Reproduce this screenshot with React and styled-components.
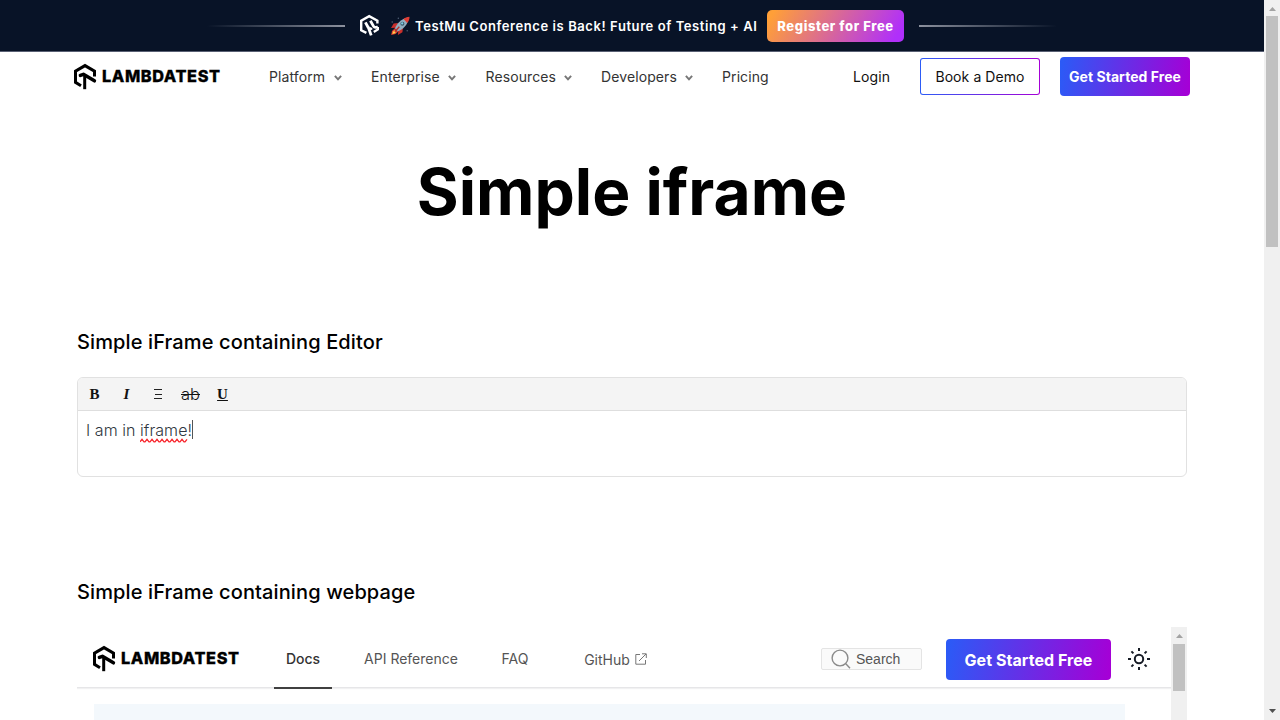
import React from "react";
import styled, { createGlobalStyle } from "styled-components";

const Global = createGlobalStyle`
  *, *::before, *::after { box-sizing: border-box; }
  html, body { margin: 0; padding: 0; overflow: hidden; background: #fff; }
  body { font-family: Inter, "Liberation Sans", sans-serif; color: #000; }
  svg { display: block; flex: none; }
`;

const Screen = styled.div`
  display: flex;
  width: 1280px;
  height: 720px;
  overflow: hidden;
`;

const Page = styled.div`
  width: 1264px;
  height: 720px;
  overflow: hidden;
`;

const Scrollbar = styled.div`
  flex: none;
  width: 16px;
  height: ${(p) => p.$height}px;
  padding: 0 2px;
  background: #f0f0f0;
  display: flex;
  flex-direction: column;
`;

const ScrollArrow = styled.span`
  height: ${(p) => p.$h}px;
  padding-top: ${(p) => p.$top}px;
  display: flex;
  justify-content: center;
`;

const Thumb = styled.div`
  height: ${(p) => p.$h}px;
  background: #c1c1c1;
  margin-bottom: auto;
`;

const Banner = styled.div`
  height: 52px;
  display: flex;
  align-items: center;
  padding-left: 207px;
  background: #081327;
  border-bottom: 1px solid #596074;
`;

const Ray = styled.span`
  width: 138px;
  height: 2px;
  margin-top: 1px;
  margin-left: ${(p) => (p.$flip ? 15 : 0)}px;
  background: linear-gradient(${(p) => (p.$flip ? "270deg" : "90deg")}, rgba(140, 145, 158, 0), #8c919e);
`;

const BannerLogo = styled.span`
  margin: 0 10px 0 14px;
`;

const BannerText = styled.span`
  flex: none;
  width: 357px;
  padding-left: 5px;
  margin-top: 1px;
  white-space: nowrap;
  color: #fff;
  font-size: 13px;
  font-weight: 600;
  letter-spacing: 0.58px;
`;

const RegisterButton = styled.a`
  width: 137px;
  height: 32px;
  border-radius: 5px;
  display: flex;
  align-items: center;
  justify-content: center;
  padding-top: 1px;
  color: #fff;
  font-size: 13px;
  font-weight: 800;
  letter-spacing: 0.6px;
  white-space: nowrap;
  background: linear-gradient(120deg, #ff9f38 5%, #b02ffb 93%);
`;

const Header = styled.header`
  height: 50px;
  display: flex;
  align-items: center;
  padding-left: 73px;
`;

const Brand = styled.a`
  width: ${(p) => p.$w}px;
  display: flex;
  align-items: center;
`;

const Nav = styled.nav`
  display: flex;
  align-items: center;
  width: 584px;
`;

const NavLink = styled.a`
  display: flex;
  align-items: center;
  justify-content: space-between;
  width: ${(p) => p.$w}px;
  margin-right: ${(p) => p.$mr ?? 0}px;
  font-size: 14px;
  line-height: 20px;
  letter-spacing: 0.1px;
  color: #333;
  white-space: nowrap;
  svg { margin-top: 2px; }
`;

const Login = styled.a`
  width: 67px;
  margin-bottom: 1px;
  font-size: 14px;
  letter-spacing: 0.1px;
  color: #111;
`;

const DemoButton = styled.a`
  width: 120px;
  height: 37px;
  margin: 0 20px 1px 0;
  border: 1px solid transparent;
  border-radius: 3px;
  display: flex;
  align-items: center;
  justify-content: center;
  font-size: 14px;
  letter-spacing: 0.08px;
  color: #111;
  background: linear-gradient(#fff, #fff) padding-box,
    linear-gradient(90deg, #2c5cf6, #a500d6) border-box;
`;

const StartButton = styled.a`
  flex: none;
  width: ${(p) => p.$w}px;
  height: ${(p) => p.$h}px;
  margin-top: ${(p) => p.$mt ?? 0}px;
  margin-bottom: ${(p) => p.$mb ?? 0}px;
  border-radius: 4px;
  display: flex;
  align-items: center;
  justify-content: center;
  color: #fff;
  font-size: ${(p) => p.$size}px;
  font-weight: 700;
  letter-spacing: ${(p) => p.$ls ?? 0}px;
  white-space: nowrap;
  background: linear-gradient(100deg, #2c5af6 2%, #a500d6 98%);
`;

const Title = styled.h1`
  margin: 52px 0 0;
  height: 76px;
  line-height: 76px;
  font-size: 64px;
  font-weight: 700;
  text-align: center;
`;

const Section = styled.section`
  margin: ${(p) => p.$top}px 0 0 77px;
  width: 1110px;
`;

const Subtitle = styled.h2`
  margin: 0 0 21px;
  font-size: 20px;
  line-height: 28px;
  font-weight: 500;
  letter-spacing: 0.12px;
`;

const Editor = styled.div`
  height: 100px;
  border: 1px solid #e1e1e1;
  border-radius: 6px;
  overflow: hidden;
`;

const Toolbar = styled.div`
  display: flex;
  height: 33px;
  padding-top: 1px;
  background: #f4f4f4;
  border-bottom: 1px solid #dedede;
`;

const Tool = styled.button`
  width: 32px;
  height: ${(p) => (p.$sans ? 29 : 31)}px;
  padding: 0 0 0 1px;
  border: 0;
  background: none;
  color: #111;
  font-family: ${(p) => (p.$sans ? "Inter, sans-serif" : '"Liberation Serif", serif')};
  font-size: ${(p) => (p.$sans ? 16.5 : 15)}px;
  font-weight: ${(p) => (p.$sans ? 300 : 700)};
  font-style: ${(p) => (p.$italic ? "italic" : "normal")};
  text-decoration: ${(p) => p.$line ?? "none"};
  display: flex;
  align-items: center;
  justify-content: center;
  svg { margin-right: 2px; }
`;

const Content = styled.div`
  display: flex;
  padding: 7px 8px;
  font-size: 16px;
  font-weight: 300;
  line-height: 24px;
  letter-spacing: 0.06px;
  color: #2f3640;
  white-space: pre;
`;

const Misspelled = styled.span`
  position: relative;
  svg { position: absolute; left: 0; bottom: -1px; }
`;

const Caret = styled.i`
  width: 1px;
  height: 19px;
  margin-top: 2px;
  background: #555;
`;

const Frame = styled.div`
  height: 93px;
  display: flex;
  overflow: hidden;
`;

const FrameBody = styled.div`
  width: 1094px;
`;

const FrameNav = styled.div`
  height: 61px;
  display: flex;
  align-items: center;
  padding: 4px 0 0 15px;
  border-bottom: 1px solid #e6e6e8;
  box-shadow: 0 1px 1px #f1f1f2;
`;

const Tab = styled.a`
  width: ${(p) => p.$w}px;
  height: 60px;
  margin-right: ${(p) => p.$mr}px;
  padding-top: ${(p) => p.$shift ?? 1}px;
  display: flex;
  align-items: center;
  justify-content: center;
  gap: 5px;
  font-size: 14px;
  white-space: nowrap;
  color: ${(p) => (p.$active ? "#333" : "#555")};
  font-weight: ${(p) => (p.$active ? 500 : 400)};
  border-bottom: 2px solid ${(p) => (p.$active ? "#404040" : "transparent")};
`;

const SearchBox = styled.div`
  width: 101px;
  height: 22px;
  margin: 0 24px 0 auto;
  padding-left: 9px;
  display: flex;
  align-items: center;
  gap: 5px;
  border: 1px solid #e4e4e4;
  border-radius: 2px;
  background: #fafafa;
  color: #555;
  font: 14px "Liberation Sans", Arial, sans-serif;
`;

const ThemeToggle = styled.span`
  margin: 0 20px 0 16px;
`;

const Panel = styled.div`
  width: 1031px;
  height: 20px;
  margin: 16px 0 0 16.5px;
  background: #f3f8fc;
`;

const LogoMark = () => (
  <svg width="24" height="28" viewBox="0 0 24 28" fill="none" stroke="#000" strokeWidth="3">
    <path d="M8 22.7 2.5 19.3V8.1L12 2.6l9.5 5.5v5.4" />
    <path d="M7.4 12.4 10.4 11.3 21.4 17.8" strokeWidth="3.5" strokeLinecap="round" strokeLinejoin="round" />
    <path d="M11.7 12v14.2" />
  </svg>
);

const Logo = ({ w }) => (
  <Brand $w={w}>
    <LogoMark />
    <svg width="124" height="28" viewBox="0 0 124 28">
      <text x="5" y="18.7" textLength="118" lengthAdjust="spacing" fontFamily="Inter" fontWeight="800" fontSize="16.3" stroke="#000" strokeWidth=".3">
        LAMBDATEST
      </text>
    </svg>
  </Brand>
);

const Chevron = () => (
  <svg width="8" height="6" viewBox="0 0 8 6" fill="none" stroke="#777" strokeWidth="2">
    <path d="m.9.9 3.1 3.4L7.1.9" />
  </svg>
);

const Arrow = ({ color, down }) => (
  <svg width="7" height="4" viewBox="0 0 7 4" fill={color}>
    <path d={down ? "M0 0h7L3.5 4z" : "M0 4h7L3.5 0z"} />
  </svg>
);

const ConferenceMark = () => (
  <svg width="21" height="24" viewBox="0 0 21 24" fill="none" stroke="#fff">
    <path d="M7.4 18.9 2.2 16.2V6.6L10.2 2.2l8.2 4.4v3M18.8 13v2.4l-4 2.5" strokeWidth="2.4" />
    <path d="M6.4 8.4 9.2 13.5q1.6 2.6 3.6.6M11.4 6.8l3.2 5.6q1.2 2 4.2.2M9.2 13l3 8.4" strokeWidth="2.8" />
  </svg>
);

const Rocket = () => (
  <svg width="20" height="20" viewBox="0 0 20 20">
    <path d="m8 7-4.3.6L1 12l5-.3zM13 12l-.6 4.3-4.5 2.6.5-5z" fill="#c9302c" />
    <path d="M5 12.3 2 15l-.8 4 4.3-1 2.8-2.7z" fill="#e8452c" />
    <path d="M5 14 3 15.8 2.4 18l2.4-.7L6.5 15z" fill="#ffd34e" />
    <path d="M4.8 12.5C7 7.5 10.5 3 18.8 1.2 18 9 12.8 13.4 7.6 15.4z" fill="#91afc0" />
    <path d="m5 12.3 2.8 2.9-1.3.8-2.4-2.5z" fill="#b33736" />
    <path d="M13.5 3c1.7-1.5 3.7-2 6-2.3.1 2.3-.8 4.6-2.3 6.2z" fill="#df3d34" />
    <circle cx="12.4" cy="7.7" r="2" fill="#3e5969" />
    <circle cx="12.2" cy="7.4" r="1.1" fill="#7fd1ea" />
    <path d="m9.3 10.7-4.5 5" stroke="#b52d2b" strokeWidth="1.3" />
    <g fill="#56657b">
      <circle cx="8.3" cy="2.2" r=".7" />
      <circle cx="2.2" cy="6" r=".7" />
      <circle cx="17.2" cy="14.8" r=".7" />
    </g>
  </svg>
);

const ListIcon = () => (
  <svg width="8" height="11" viewBox="0 0 8 11" stroke="#222">
    <path d="M0 .5h8M1 5.5h7M0 9.5h8" />
  </svg>
);

const Squiggle = () => (
  <svg width="48" height="5" viewBox="0 0 48 5" fill="none" stroke="#f82028" strokeWidth="1.3">
    <path d="M0 3.8 2 1.3l2 2.5h1l2-2.5 2 2.5h1l2-2.5 2 2.5h1l2-2.5 2 2.5h1l2-2.5 2 2.5h1l2-2.5 2 2.5h1l2-2.5 2 2.5h1l2-2.5 2 2.5h1l2-2.5 2 2.5h1l2-2.5" />
  </svg>
);

const ExternalIcon = () => (
  <svg width="12" height="12" viewBox="0 0 12 12" fill="none" stroke="#777">
    <path d="M5 1.5H.8v9.7h9.7V7M7 .8h4.3V5M4 8 11 1" />
  </svg>
);

const SearchIcon = () => (
  <svg width="20" height="20" viewBox="0 0 20 20" fill="none" stroke="#8a8a8a" strokeWidth="1.4">
    <circle cx="9" cy="9" r="7.9" />
    <path d="m14.8 14.8 4.2 4.4" />
  </svg>
);

const SunIcon = () => (
  <svg width="24" height="24" viewBox="0 0 24 24" fill="none" stroke="#161b25" strokeWidth="2">
    <circle cx="12" cy="12" r="4.2" />
    <path d="M12 1v3M12 20v3M1 12h3M20 12h3M4.4 4.4l2 2M17.6 17.6l2 2M4.4 19.6l2-2M17.6 6.4l2-2" />
  </svg>
);

const links = [
  { label: "Platform", w: 73, mr: 29 },
  { label: "Enterprise", w: 85, mr: 29.5 },
  { label: "Resources", w: 86.5, mr: 29 },
  { label: "Developers", w: 92, mr: 29 },
];

export default function App() {
  return (
    <Screen>
      <Global />
      <Page>
        <Banner>
          <Ray />
          <BannerLogo><ConferenceMark /></BannerLogo>
          <Rocket />
          <BannerText>TestMu Conference is Back! Future of Testing + AI</BannerText>
          <RegisterButton>Register for Free</RegisterButton>
          <Ray $flip />
        </Banner>
        <Header>
          <Logo w={196} />
          <Nav>
            {links.map((l) => (
              <NavLink key={l.label} $w={l.w} $mr={l.mr}>
                {l.label}
                <Chevron />
              </NavLink>
            ))}
            <NavLink $w={47}>Pricing</NavLink>
          </Nav>
          <Login>Login</Login>
          <DemoButton>Book a Demo</DemoButton>
          <StartButton $w={130} $h={39} $mb={1} $size={14} $ls={0.05}>Get Started Free</StartButton>
        </Header>
        <Title>Simple iframe</Title>
        <Section $top={98}>
          <Subtitle>Simple iFrame containing Editor</Subtitle>
          <Editor>
            <Toolbar>
              <Tool>B</Tool>
              <Tool $italic>I</Tool>
              <Tool><ListIcon /></Tool>
              <Tool $sans $line="line-through">ab</Tool>
              <Tool $line="underline">U</Tool>
            </Toolbar>
            <Content>
              {"I am in "}
              <Misspelled>iframe!<Squiggle /></Misspelled>
              <Caret />
            </Content>
          </Editor>
        </Section>
        <Section $top={101}>
          <Subtitle>Simple iFrame containing webpage</Subtitle>
          <Frame>
            <FrameBody>
              <FrameNav>
                <Logo w={182} />
                <Tab $w={58} $mr={32} $active>Docs</Tab>
                <Tab $w={94} $mr={43.5}>API Reference</Tab>
                <Tab $w={27} $mr={53.5}>FAQ</Tab>
                <Tab $w={67} $mr={0} $shift={2}>GitHub <ExternalIcon /></Tab>
                <SearchBox><SearchIcon />Search</SearchBox>
                <StartButton $w={165} $h={41} $mt={1} $size={16} $ls={0.05}>Get Started Free</StartButton>
                <ThemeToggle><SunIcon /></ThemeToggle>
              </FrameNav>
              <Panel />
            </FrameBody>
            <Scrollbar $height={93}>
              <ScrollArrow $h={17} $top={7}><Arrow color="#a3a3a3" /></ScrollArrow>
              <Thumb $h={47} />
            </Scrollbar>
          </Frame>
        </Section>
      </Page>
      <Scrollbar $height={720}>
        <ScrollArrow $h={16} $top={7}><Arrow color="#a3a3a3" /></ScrollArrow>
        <Thumb $h={231} />
        <ScrollArrow $h={16} $top={5}><Arrow color="#505050" down /></ScrollArrow>
      </Scrollbar>
    </Screen>
  );
}
